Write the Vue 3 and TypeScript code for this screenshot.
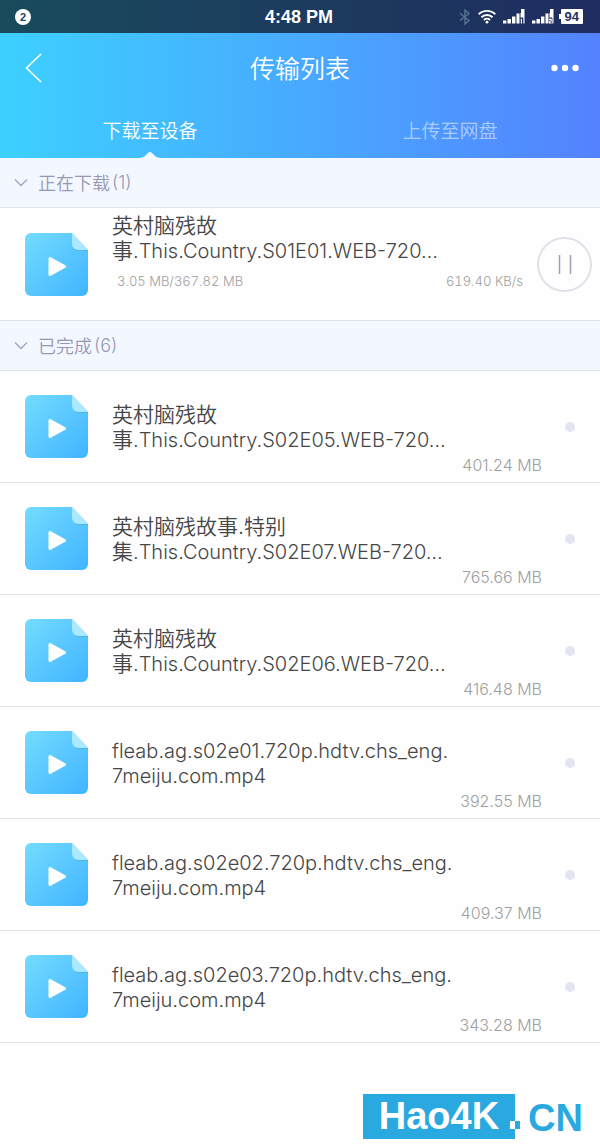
<script setup lang="ts">
import { ref } from 'vue'

interface NameLine {
  cjk?: string
  latin?: string
}

interface FileItem {
  id: number
  lines: NameLine[]
  size: string
}

const tabs = ['下载至设备', '上传至网盘']
const activeTab = ref(0)
const showActive = ref(true)
const showDone = ref(true)
const paused = ref(false)

const current = {
  lines: [{ cjk: '英村脑残故' }, { cjk: '事', latin: '.This.Country.S01E01.WEB-720…' }] as NameLine[],
  progress: '3.05 MB/367.82 MB',
  speed: '619.40 KB/s',
}

const done: FileItem[] = [
  { id: 1, lines: [{ cjk: '英村脑残故' }, { cjk: '事', latin: '.This.Country.S02E05.WEB-720…' }], size: '401.24 MB' },
  { id: 2, lines: [{ cjk: '英村脑残故事.特别' }, { cjk: '集', latin: '.This.Country.S02E07.WEB-720…' }], size: '765.66 MB' },
  { id: 3, lines: [{ cjk: '英村脑残故' }, { cjk: '事', latin: '.This.Country.S02E06.WEB-720…' }], size: '416.48 MB' },
  { id: 4, lines: [{ latin: 'fleab.ag.s02e01.720p.hdtv.chs_eng.' }, { latin: '7meiju.com.mp4' }], size: '392.55 MB' },
  { id: 5, lines: [{ latin: 'fleab.ag.s02e02.720p.hdtv.chs_eng.' }, { latin: '7meiju.com.mp4' }], size: '409.37 MB' },
  { id: 6, lines: [{ latin: 'fleab.ag.s02e03.720p.hdtv.chs_eng.' }, { latin: '7meiju.com.mp4' }], size: '343.28 MB' },
]
</script>

<template>
  <div class="page">
    <svg class="defs" width="0" height="0" aria-hidden="true">
      <defs>
        <linearGradient id="fileFill" x1="0" y1="0" x2="1" y2="1">
          <stop offset="0" stop-color="#74dcff" />
          <stop offset="1" stop-color="#40b4ff" />
        </linearGradient>
        <symbol id="videoFile" viewBox="0 0 63 63">
          <path d="M6 0H47L63 17V57a6 6 0 0 1-6 6H6a6 6 0 0 1-6-6V6a6 6 0 0 1 6-6Z" fill="url(#fileFill)" />
          <path d="M47 0L63 17H53a6 6 0 0 1-6-6Z" fill="#a9e8ff" />
          <path d="M47 11a6 6 0 0 0 6 6H63V18H53a7 7 0 0 1-6-7Z" fill="#4fb4e8" opacity=".7" />
          <path d="M25 25.500L39.500 33.500L25 41.500Z" fill="#fff" stroke="#fff" stroke-width="3" stroke-linejoin="round" />
        </symbol>
      </defs>
    </svg>

    <div class="status">
      <span class="badge">2</span>
      <span class="clock">4:48 PM</span>
      <div class="indicators">
        <svg width="12" height="16" viewBox="0 0 12 16" fill="none" stroke="#56718d" stroke-width="1.500">
          <path d="M1 4.500L10 11.500L6 15V1L10 4.500L1 11.500" />
        </svg>
        <svg class="wifi" width="18" height="15" viewBox="0 0 18 15" fill="none" stroke="#fff" stroke-width="1.900">
          <path d="M.7 5.300a11.800 11.800 0 0 1 16.600 0" />
          <path d="M3.400 8.300a8 8 0 0 1 11.200 0" />
          <path d="M6 11a4.300 4.300 0 0 1 6 0" />
          <circle cx="9" cy="13.200" r="1.400" fill="#fff" stroke="none" />
        </svg>
        <svg v-for="sim in 2" :key="sim" class="signal" width="22" height="15" viewBox="0 0 22 15" fill="#fff">
          <rect x="0" y="11.500" width="3.400" height="3" />
          <rect x="4.500" y="10" width="3.400" height="4.500" />
          <rect x="9" y="7.500" width="3.400" height="7" />
          <rect x="13.500" y="4.500" width="3" height="10" />
          <path d="M18 0H21.500V14.500H20.300V8.500H17.500V4H18Z" />
          <path v-if="sim === 1" d="M17.800 9.800H19V14.500H17.800Z" />
          <path v-else d="M17 9.800H19.800V12.600H18.200V13.400H19.800V14.500H17V11.700H18.600V11H17Z" />
        </svg>
        <span class="battery">94</span>
      </div>
    </div>

    <header class="header">
      <div class="bar">
        <button class="icon-btn back" type="button" aria-label="返回">
          <svg width="17" height="30" viewBox="0 0 17 30" fill="none" stroke="#fff" stroke-width="1.600">
            <path d="M16 1L1.500 15L16 29" />
          </svg>
        </button>
        <h1 class="title">传输列表</h1>
        <button class="icon-btn more" type="button" aria-label="更多">
          <svg width="28" height="8" viewBox="0 0 28 8" fill="#fff">
            <circle cx="3.500" cy="4" r="3.200" />
            <circle cx="14" cy="4" r="3.200" />
            <circle cx="24.500" cy="4" r="3.200" />
          </svg>
        </button>
      </div>
      <nav class="tabs">
        <button
          v-for="(tab, i) in tabs"
          :key="tab"
          type="button"
          class="tab"
          :class="{ active: activeTab === i }"
          @click="activeTab = i"
        >
          {{ tab }}
          <svg v-if="activeTab === i" class="caret" width="22" height="7" viewBox="0 0 22 7">
            <path d="M0 7C5 6.500 6 5 9 2Q11 0 13 2C16 5 17 6.500 22 7Z" fill="#f3f7ff" />
          </svg>
        </button>
      </nav>
    </header>

    <main>
      <button class="section" type="button" :aria-expanded="showActive" @click="showActive = !showActive">
        <svg width="14" height="9" viewBox="0 0 14 9" fill="none" stroke="#a0a3bf" stroke-width="1.300">
          <path d="M1 1.500L7 7.500L13 1.500" />
        </svg>
        <span class="label">正在下载</span><span class="count">(1)</span>
      </button>
      <article v-if="showActive" class="row downloading">
        <svg class="file" width="63" height="63"><use href="#videoFile" /></svg>
        <div class="body">
          <div class="name">
            <div v-for="(line, i) in current.lines" :key="i"><span v-if="line.cjk">{{ line.cjk }}</span><span v-if="line.latin" class="latin">{{ line.latin }}</span></div>
          </div>
          <div class="meta"><span>{{ current.progress }}</span><span>{{ current.speed }}</span></div>
        </div>
        <button class="pause" type="button" :aria-pressed="paused" aria-label="暂停" @click="paused = !paused">
          <svg width="14" height="19" viewBox="0 0 14 19" fill="none" stroke="#a0a0b8" stroke-width="1.500">
            <path d="M1.500 0V19M12.500 0V19" />
          </svg>
        </button>
      </article>

      <button class="section" type="button" :aria-expanded="showDone" @click="showDone = !showDone">
        <svg width="14" height="9" viewBox="0 0 14 9" fill="none" stroke="#a0a3bf" stroke-width="1.300">
          <path d="M1 1.500L7 7.500L13 1.500" />
        </svg>
        <span class="label">已完成</span><span class="count">(6)</span>
      </button>
      <template v-if="showDone">
        <article v-for="item in done" :key="item.id" class="row">
          <svg class="file" width="63" height="63"><use href="#videoFile" /></svg>
          <div class="body">
            <div class="name">
              <div v-for="(line, i) in item.lines" :key="i"><span v-if="line.cjk">{{ line.cjk }}</span><span v-if="line.latin" class="latin">{{ line.latin }}</span></div>
            </div>
            <div class="size">{{ item.size }}</div>
          </div>
          <button class="select" type="button" aria-label="选择"><i></i></button>
        </article>
      </template>
    </main>

    <footer class="brand">
      <span class="brand-box">Hao4K</span>
      <i class="brand-dot"></i>
      <span class="brand-cn">CN</span>
    </footer>
  </div>
</template>

<style>
body {
  margin: 0;
  background: #fefefe;
}
</style>

<style scoped>
.page {
  min-height: 100vh;
  display: flex;
  flex-direction: column;
  background: #fefefe;
  color: #464646;
  font-family: Inter, "Noto Sans CJK SC", sans-serif;
  font-weight: 350;
}
.defs {
  position: absolute;
}
button {
  margin: 0;
  padding: 0;
  border: 0;
  background: none;
  color: inherit;
  font: inherit;
  cursor: pointer;
}
.status {
  display: grid;
  grid-template-columns: 1fr auto 1fr;
  align-items: center;
  height: 33px;
  padding: 0 17px 0 15px;
  background: linear-gradient(90deg, #194b5c, #1f2c60);
  color: #fff;
  font-family: "Liberation Sans", sans-serif;
}
.badge {
  width: 16px;
  height: 16px;
  border-radius: 50%;
  background: #fff;
  color: #1b4459;
  font-size: 11px;
  font-weight: 700;
  line-height: 16px;
  text-align: center;
}
.clock {
  padding-top: 2px;
  font-size: 18px;
  font-weight: 700;
}
.indicators {
  display: flex;
  align-items: center;
  justify-content: flex-end;
}
.wifi {
  margin: 0 7px 0 7px;
}
.signal {
  margin-right: 7px;
}
.battery {
  position: relative;
  padding: 0 4px;
  border-radius: 1px;
  background: #fff;
  color: #1f3360;
  font-size: 13px;
  font-weight: 700;
  line-height: 15px;
}
.battery::before {
  content: "";
  position: absolute;
  left: -2px;
  top: 5px;
  width: 2px;
  height: 5px;
  background: #fff;
}
.header {
  background: linear-gradient(90deg, #3dd0ff, #47aeff 45%, #5482ff);
  color: #fff;
}
.bar {
  display: flex;
  align-items: center;
  justify-content: space-between;
  height: 70px;
  padding: 0 21px;
}
.icon-btn {
  display: flex;
  align-items: center;
  width: 32px;
  height: 40px;
}
.back {
  padding-left: 4px;
}
.more {
  justify-content: flex-end;
}
.title {
  margin: 0;
  padding-top: 2px;
  font-size: 25px;
  font-weight: 350;
  line-height: 36px;
}
.tabs {
  display: grid;
  grid-template-columns: 1fr 1fr;
}
.tab {
  position: relative;
  height: 55px;
  padding-bottom: 2px;
  font-size: 19px;
  color: rgba(255, 255, 255, 0.55);
}
.tab.active {
  color: #fff;
}
.caret {
  position: absolute;
  left: 50%;
  bottom: 0;
  margin-left: -11px;
}
.section {
  display: flex;
  align-items: center;
  box-sizing: border-box;
  width: 100%;
  height: 50px;
  padding-left: 14px;
  border-bottom: 1px solid #e1e3ea;
  background: #f3f7ff;
  color: #9799b4;
  font-size: 18px;
}
.section svg {
  margin-right: 10px;
}
.label {
  padding-bottom: 2px;
}
.count {
  margin-left: 2px;
  font-weight: 300;
}
.row {
  display: flex;
  align-items: center;
  box-sizing: border-box;
  height: 112px;
  padding: 0 3px 0 25px;
  border-bottom: 1px solid #e2e2e4;
}
.file {
  flex: none;
  margin-right: 24px;
}
.body {
  flex: 1;
  min-width: 0;
  align-self: stretch;
  padding-top: 31px;
}
.name {
  font-size: 21px;
  line-height: 25px;
}
.name div {
  height: 25px;
  white-space: nowrap;
}
.latin {
  font-size: 20px;
  font-weight: 300;
}
.size {
  color: #a0a0a0;
  font-size: 16px;
  font-weight: 300;
  line-height: 27px;
  text-align: right;
}
.select {
  display: flex;
  align-items: center;
  justify-content: center;
  width: 55px;
  height: 55px;
}
.select i {
  width: 10px;
  height: 10px;
  border-radius: 50%;
  background: #e3e5f2;
}
.downloading {
  height: 113px;
  padding-right: 8px;
}
.downloading .body {
  padding-top: 5px;
}
.meta {
  display: flex;
  justify-content: space-between;
  padding: 8px 14px 0 5px;
  color: #a0a0a0;
  font-size: 13px;
  font-weight: 300;
  font-variant-numeric: tabular-nums;
  line-height: 20px;
}
.pause {
  display: flex;
  align-items: center;
  justify-content: center;
  box-sizing: border-box;
  width: 55px;
  height: 55px;
  border: 2px solid #e1e1e9;
  border-radius: 50%;
}
.brand {
  display: flex;
  align-items: center;
  justify-content: flex-end;
  margin-top: auto;
  padding: 0 17px 5px 0;
  color: #2aa9e0;
  font-family: "Liberation Sans", sans-serif;
  font-size: 38px;
  font-weight: 700;
  line-height: 45px;
}
.brand-box {
  padding: 0 16px;
  background: #2aa9e0;
  color: #fff;
}
.brand-dot {
  z-index: 1;
  width: 10px;
  height: 8px;
  margin: 16px 8px 0 -5px;
  background: linear-gradient(90deg, #fff 50%, #2aa9e0 50%);
}
.brand-cn {
  line-height: 49px;
  margin-bottom: -4px;
}
</style>
